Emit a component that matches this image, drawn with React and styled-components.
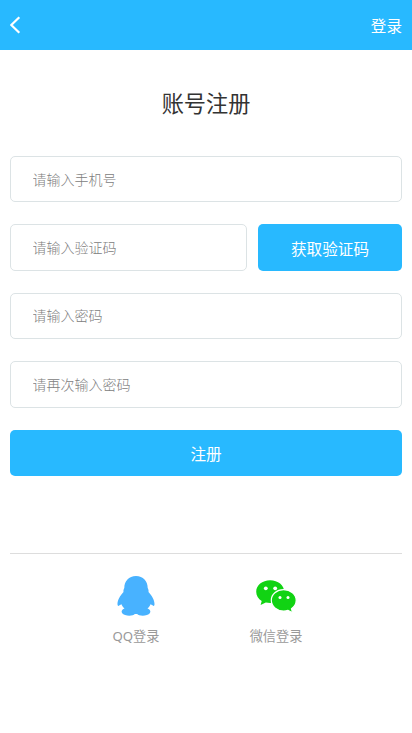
import React from 'react';
import styled, { createGlobalStyle } from 'styled-components';

const GlobalStyle = createGlobalStyle`
  * { box-sizing: border-box; }
  body {
    margin: 0;
    background: #fff;
    font-family: "Noto Sans CJK SC", sans-serif;
  }
`;

const Page = styled.div`
  min-height: 733px;
  background: #fff;
`;

const Header = styled.header`
  display: flex;
  align-items: center;
  justify-content: space-between;
  height: 50px;
  padding: 0 10px;
  background: #28b9ff;
  color: #fff;
`;

const BackButton = styled.button`
  display: flex;
  padding: 0;
  border: 0;
  background: none;
`;

const LoginLink = styled.a`
  color: #fff;
  font-size: 15.6px;
  line-height: 50px;
`;

const Title = styled.h1`
  margin: 0;
  padding-top: 32px;
  height: 106px;
  color: #333;
  font-size: 22.2px;
  font-weight: 400;
  line-height: 40px;
  text-align: center;
`;

const Form = styled.form`
  display: flex;
  flex-direction: column;
  gap: 22px;
  padding: 0 10px;
`;

const CodeRow = styled.div`
  display: grid;
  grid-template-columns: 237px 144px;
  justify-content: space-between;
`;

const Field = styled.input`
  width: 100%;
  height: 46.4px;
  padding: 0 22px 1px 21.5px;
  border: 1px solid #dce3e5;
  border-radius: 5px;
  outline: none;
  background: #fff;
  color: #333;
  font-family: inherit;
  font-size: 14px;
  &::placeholder { color: #808080; font-weight: 300; opacity: 1; }
`;

const Button = styled.button`
  height: 46.4px;
  padding: 0;
  border: 0;
  border-radius: 5px;
  background: #28b9ff;
  color: #fff;
  font-family: inherit;
  font-size: 15.6px;
`;

const Social = styled.div`
  display: flex;
  justify-content: center;
  gap: 80px;
  margin: 77px 10px 0;
  padding-top: 20px;
  border-top: 1px solid #ddd;
`;

const SocialItem = styled.a`
  display: flex;
  flex-direction: column;
  align-items: center;
  width: 60px;
  color: #999;
  font-family: "Noto Sans", "Noto Sans CJK SC", sans-serif;
  font-size: 13.2px;
  line-height: 20px;
  svg { display: block; margin-bottom: 8px; }
`;

const BackIcon = () => (
  <svg width="11" height="18" viewBox="0 0 11 18" fill="none">
    <path d="M9.300 1.200 1.300 9l8 7.800" stroke="#fff" strokeWidth="2.200" />
  </svg>
);

const PenguinIcon = () => (
  <svg width="44" height="44" viewBox="0 0 44 44">
    <path
      fill="#48b2ff"
      d="M22 2C14.800 2 10.300 7 10.300 14C9.600 15.200 9.200 16.500 9.500 18C6 21.800 3.200 26.600 3.500 30.500C3.700 32.200 4.500 32.200 5.500 31.200L7.500 30.200C8.200 32 8.900 33.200 10.500 34.500C8 35.500 7 37 8 39C10.500 42.500 19 42.400 20.800 40H23.200C25 42.400 33.500 42.500 36 39C37 37 36 35.500 33.500 34.500C35.100 33.200 35.800 32 36.500 30.200L38.500 31.200C39.500 32.200 40.300 32.200 40.500 30.500C40.800 26.600 38 21.800 34.500 18C34.800 16.500 34.400 15.200 33.700 14C33.700 7 29.200 2 22 2Z"
    />
  </svg>
);

const WechatIcon = () => (
  <svg width="44" height="44" viewBox="0 0 44 44">
    <path fill="#11d313" d="M16.200 6.300C8.200 6.300 2.200 11.300 2.200 17.700C2.200 21.600 4.300 24.800 7.700 26.900L6.600 31L11.800 28.500C13.200 28.800 14.600 29 16.200 29C24 29 30.200 24 30.200 17.600C30.200 11.300 24 6.300 16.200 6.300Z" />
    <path fill="#11d313" stroke="#fff" strokeWidth="1.200" d="M29.600 15.700C22.700 15.700 17.300 20.400 17.300 26.300C17.300 32.200 22.700 37 29.600 37C31.200 37 32.600 36.800 34 36.400L38.600 38.800L37.500 34.700C40.400 32.700 42.200 29.800 42.200 26.300C42.200 20.400 36.600 15.700 29.600 15.700Z" />
    <g fill="#fff">
      <circle cx="11.800" cy="14.300" r="1.900" />
      <circle cx="21.200" cy="14.300" r="1.900" />
      <circle cx="26" cy="23.500" r="1.500" />
      <circle cx="34" cy="23.500" r="1.500" />
    </g>
  </svg>
);

export default function App() {
  return (
    <Page>
      <GlobalStyle />
      <Header>
        <BackButton type="button" aria-label="返回"><BackIcon /></BackButton>
        <LoginLink>登录</LoginLink>
      </Header>
      <Title>账号注册</Title>
      <Form>
        <Field placeholder="请输入手机号" />
        <CodeRow>
          <Field placeholder="请输入验证码" />
          <Button type="button">获取验证码</Button>
        </CodeRow>
        <Field type="password" placeholder="请输入密码" />
        <Field type="password" placeholder="请再次输入密码" />
        <Button type="button">注册</Button>
      </Form>
      <Social>
        <SocialItem><PenguinIcon />QQ登录</SocialItem>
        <SocialItem><WechatIcon />微信登录</SocialItem>
      </Social>
    </Page>
  );
}
